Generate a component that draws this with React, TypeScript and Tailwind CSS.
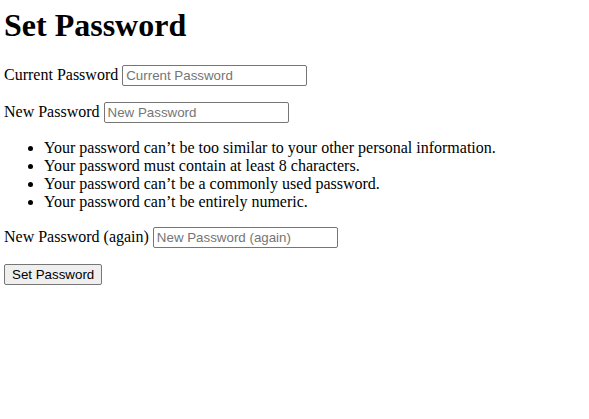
export default function App() {
  const rules = [
    "Your password can’t be too similar to your other personal information.",
    "Your password must contain at least 8 characters.",
    "Your password can’t be a commonly used password.",
    "Your password can’t be entirely numeric.",
  ]

  const field = (id: string, label: string) => (
    <p className="my-4">
      <label htmlFor={id}>{label}</label>{" "}
      <input
        id={id}
        type="password"
        placeholder={label}
        className="inline-block h-[21px] w-[185px] rounded-[2px] border border-[#767676] bg-white px-[3px] align-baseline font-['Liberation_Sans',Arial,sans-serif] text-[13.33px] leading-[normal] text-black placeholder:text-[#757575]"
      />
    </p>
  )

  return (
    <div className="min-h-screen bg-white px-1 pt-[7px] font-['Liberation_Serif','Times_New_Roman',serif] text-base leading-[normal] text-black">
      <h1 className="mb-[21.44px] text-[32px] font-bold leading-[normal]">Set Password</h1>
      <form>
        {field("id_old_password", "Current Password")}
        {field("id_new_password1", "New Password")}
        <ul className="my-4 list-disc pl-10">
          {rules.map((r) => (
            <li key={r}>{r}</li>
          ))}
        </ul>
        {field("id_new_password2", "New Password (again)")}
        <button
          type="submit"
          className="h-[21px] rounded-[2px] border border-[#767676] bg-[#efefef] px-[7px] font-['Liberation_Sans',Arial,sans-serif] text-[13.33px] leading-[normal] text-black"
        >
          Set Password
        </button>
      </form>
    </div>
  )
}
